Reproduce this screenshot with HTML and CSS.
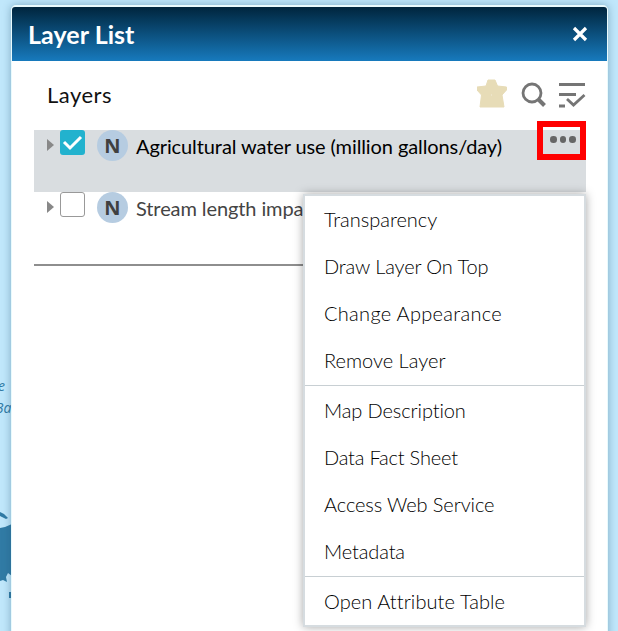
FILE: index.html
```
<!DOCTYPE html>
<html lang="en">
<head>
<meta charset="utf-8">
<title>Layer List</title>
<link rel="stylesheet" href="styles.css">
</head>
<body>
<svg class="map" viewBox="0 0 618 631" aria-hidden="true">
  <text x="-2" y="391">e</text>
  <text x="-5" y="413">Ba</text>
  <path d="M0 512l4 2 4 4-2 1-6-3zM0 528l5-1 7-3v52l-4-3-2 4 1 5-4-2-3 1zM9 592h3v6h-3z"/>
</svg>
<main class="panel">
  <header class="panel-header">
    <h1>Layer List</h1>
    <svg class="close" viewBox="0 0 16 16"><path d="M2 2l12 12M14 2L2 14"/></svg>
  </header>
  <section class="content">
    <div class="toolbar">
      <h2>Layers</h2>
      <svg class="tools" viewBox="0 0 112 34">
        <path class="star" d="M11 1h7l2.500 6 9 1v3l-4.500 5 2 12H3l1.500-12L0 11V8l9-1zM14 15v2h1.500v-2z"/>
        <g class="lines"><circle cx="55" cy="14" r="9"/><path class="handle" d="M61.500 20.500l6 6"/><path d="M82 5.500h26M82 15.500h17M82 27h6"/><path class="tick" d="M90 20l6.500 6L107.500 16"/></g>
      </svg>
    </div>
    <div class="layer selected">
      <svg class="arrow" viewBox="0 0 7 12"><path d="M0 0l7 6-7 6z"/></svg>
      <span class="check on"><svg viewBox="0 0 25 25"><path d="M4 12l6 6L21 7"/></svg></span>
      <span class="badge">N</span>
      <span class="name">Agricultural water use (million gallons/day)</span>
      <span class="more"><i></i><i></i><i></i></span>
    </div>
    <div class="layer">
      <svg class="arrow" viewBox="0 0 7 12"><path d="M0 0l7 6-7 6z"/></svg>
      <span class="check"></span>
      <span class="badge">N</span>
      <span class="name">Stream length impa</span>
    </div>
    <hr class="rule">
  </section>
</main>
<ul class="menu">
  <li>Transparency</li>
  <li class="draw">Draw Layer On Top</li>
  <li class="appearance">Change Appearance</li>
  <li>Remove Layer</li>
  <li class="divider"></li>
  <li class="description">Map Description</li>
  <li class="facts">Data Fact Sheet</li>
  <li class="service">Access Web Service</li>
  <li class="metadata">Metadata</li>
  <li class="divider"></li>
  <li class="table">Open Attribute Table</li>
</ul>
</body>
</html>
```
FILE: styles.css
```
* { box-sizing: border-box; }
body { margin: 0; height: 631px; overflow: hidden; position: relative; padding: 5px 10px 0 11px; background: #c0e7fb; font-family: Lato, "Open Sans", sans-serif; }
.map { position: absolute; left: 0; top: 0; width: 618px; height: 631px; fill: #317ba5; }
.map text { font: italic 14px "Open Sans", sans-serif; }
.panel { position: relative; height: 640px; background: #fff; border: 1px solid #e9fafd; border-top-width: 2px; border-radius: 5px 5px 0 0; box-shadow: 0 0 9px rgba(30, 80, 110, .4); }
.panel-header { height: 54px; display: flex; align-items: center; justify-content: space-between; padding: 0 19px 0 16px; border-radius: 3px 3px 0 0; background: linear-gradient(#00253d, #177abd); }
h1 { margin: 0; font-size: 25px; line-height: 30px; font-weight: 700; color: #fff; letter-spacing: .05px; }
.close { width: 16px; height: 16px; fill: none; stroke: #fff; stroke-width: 3.2; }
.content { padding: 0 20px 0 22px; }
.toolbar { height: 69px; display: flex; align-items: center; justify-content: space-between; padding: 0 0 2px 13px; }
h2 { margin: 0; font-size: 22px; font-weight: 400; color: #111; letter-spacing: .5px; }
.tools { width: 112px; height: 34px; position: relative; left: 2px; top: 1px; }
.star { fill: #e7dcb7; fill-rule: evenodd; stroke: #e7dcb7; stroke-width: 1; stroke-linejoin: round; }
.lines { fill: none; stroke: #757575; stroke-width: 2.8; }
.handle { stroke-width: 4; }
.layer { height: 62px; display: flex; align-items: flex-start; margin-right: 1px; padding-left: 13px; color: #444; }
.selected { background: #d9dde0; color: #000; }
.arrow { width: 7px; height: 12px; margin: 9px 6px 0 0; fill: #888; }
.check { width: 25px; height: 25px; border: 1.5px solid #999; border-radius: 3px; background: #fff; }
.on { border: 0; background: #22b2ce; }
.on svg { display: block; fill: none; stroke: #fff; stroke-width: 3; }
.badge { width: 31px; height: 31px; margin-left: 12px; border-radius: 50%; background: #b6cce1; color: #404040; font: 700 20px/31px "Open Sans", sans-serif; text-align: center; }
.name { margin: 4px 0 0 8px; font-size: 20px; line-height: 25px; white-space: nowrap; letter-spacing: -.1px; }
.more { position: relative; display: flex; gap: 3px; justify-content: center; flex: none; width: 49px; height: 39px; margin: -9px 0 0 auto; border: 6px solid #f00; padding: 9px 0 0 3px; }
.more i { width: 6.500px; height: 6.500px; border-radius: 50%; background: #666; }
.rule { height: 2px; margin: 10px 1px 0 0; border: 0; background: #8e8e8e; }
.menu { position: absolute; left: 303px; top: 194px; width: 282.500px; height: 433px; margin: 0; padding: 0; list-style: none; background: #fff; border: 2px solid #d6dce0; box-shadow: 0 0 9px rgba(0, 0, 0, .35); color: #000; }
.menu li { height: 47px; padding-left: 19px; font-size: 20px; font-weight: 300; line-height: 46px; white-space: nowrap; }
.menu .draw { letter-spacing: -.12px; }
.menu .appearance { letter-spacing: .3px; }
.menu .description { letter-spacing: -.1px; }
.menu .facts { letter-spacing: -.2px; }
.menu .service { letter-spacing: -.1px; }
.menu .metadata { letter-spacing: -.12px; }
.menu .table { letter-spacing: .08px; }
.menu .divider { height: 1px; margin: 1px 0; padding: 0; background: #c8cfd3; }
```
